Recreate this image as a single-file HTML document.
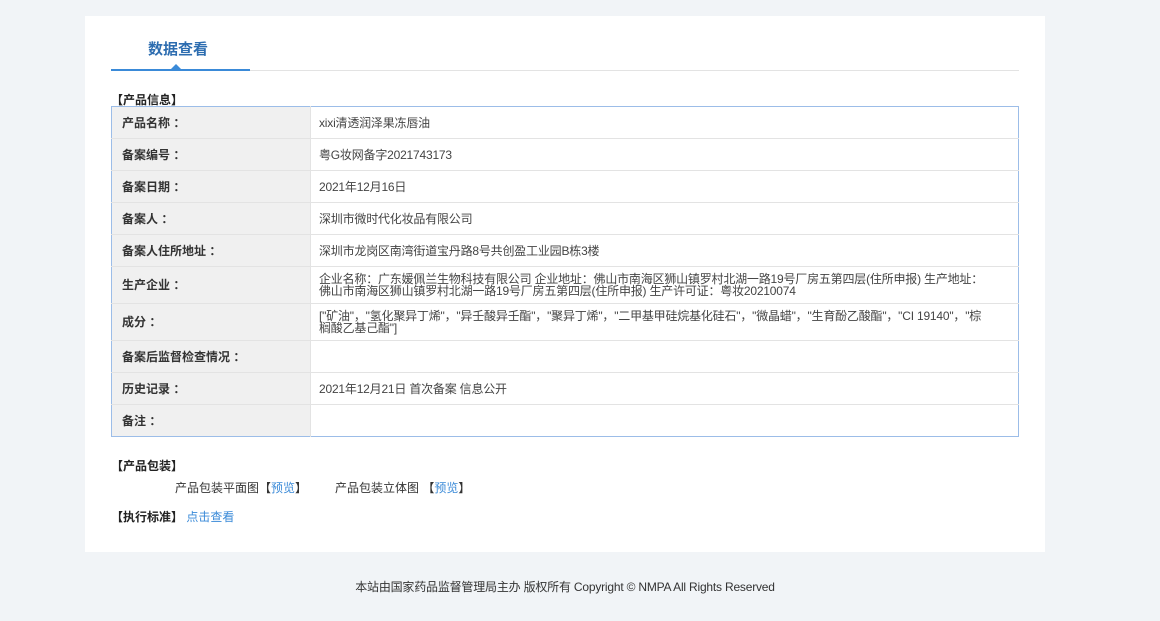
<!DOCTYPE html>
<html><head><meta charset="utf-8"><style>
*{margin:0;padding:0;box-sizing:border-box}
body{width:1160px;height:621px;background:#f1f4f7;font-family:"Liberation Sans","Noto Sans CJK SC",sans-serif;font-size:12px;color:#333;position:relative;overflow:hidden}
.panel{position:absolute;left:85px;top:16px;width:960px;height:536px;background:#fff}
.tab{position:absolute;left:63px;top:22px;font-size:15px;font-weight:bold;color:#2d6db0}
.line{position:absolute;left:26px;top:54px;width:908px;height:1px;background:#e3e3e3}
.line b{position:absolute;left:0;top:-1px;width:139px;height:2px;background:#3a8ad8}
.tri{position:absolute;left:85px;top:48px;width:0;height:0;border-left:6px solid transparent;border-right:6px solid transparent;border-bottom:6px solid #3a8ad8}
.h{position:absolute;left:26px;font-weight:bold;color:#222}
table{position:absolute;left:26px;top:90px;width:908px;border-collapse:collapse;border:1px solid #9cbde8}
td{border-bottom:1px solid #e3e3e3;height:32px;vertical-align:middle;line-height:12px}
td.l{width:199px;background:#f0f0f0;font-weight:bold;padding-left:10px;border-right:1px solid #e3e3e3}
td.v{padding-left:8px;padding-right:30px;color:#444;letter-spacing:-0.2px}
tr.t td{height:37px}
a{color:#3a8ad8;text-decoration:none}
.foot{position:absolute;top:578px;left:0;width:1130px;text-align:center;color:#333;letter-spacing:-0.2px}
</style></head><body>
<div class="panel">
<div class="tab">数据查看</div>
<div class="line"><b></b></div>
<div class="tri"></div>
<div class="h" style="top:75px">【产品信息】</div>
<table>
<tr><td class="l">产品名称 ：</td><td class="v">xixi清透润泽果冻唇油</td></tr>
<tr><td class="l">备案编号 ：</td><td class="v">粤G妆网备字2021743173</td></tr>
<tr><td class="l">备案日期 ：</td><td class="v">2021年12月16日</td></tr>
<tr><td class="l">备案人 ：</td><td class="v">深圳市微时代化妆品有限公司</td></tr>
<tr><td class="l">备案人住所地址 ：</td><td class="v">深圳市龙岗区南湾街道宝丹路8号共创盈工业园B栋3楼</td></tr>
<tr class="t"><td class="l">生产企业 ：</td><td class="v">企业名称：广东媛佩兰生物科技有限公司 企业地址：佛山市南海区狮山镇罗村北湖一路19号厂房五第四层(住所申报) 生产地址：佛山市南海区狮山镇罗村北湖一路19号厂房五第四层(住所申报) 生产许可证：粤妆20210074</td></tr>
<tr class="t"><td class="l">成分 ：</td><td class="v">["矿油"，"氢化聚异丁烯"，"异壬酸异壬酯"，"聚异丁烯"，"二甲基甲硅烷基化硅石"，"微晶蜡"，"生育酚乙酸酯"，"CI 19140"，"棕榈酸乙基己酯"]</td></tr>
<tr><td class="l">备案后监督检查情况 ：</td><td class="v"></td></tr>
<tr><td class="l">历史记录 ：</td><td class="v">2021年12月21日 首次备案 信息公开</td></tr>
<tr><td class="l" style="border-bottom:none">备注 ：</td><td class="v" style="border-bottom:none"></td></tr>
</table>
<div class="h" style="top:441px">【产品包装】</div>
<div style="position:absolute;left:90px;top:463px">产品包装平面图【<a>预览</a>】</div>
<div style="position:absolute;left:250px;top:463px">产品包装立体图 【<a>预览</a>】</div>
<div class="h" style="top:492px">【执行标准】 <a style="font-weight:normal">点击查看</a></div>
</div>
<div class="foot">本站由国家药品监督管理局主办 版权所有 Copyright © NMPA All Rights Reserved</div>
</body></html>
